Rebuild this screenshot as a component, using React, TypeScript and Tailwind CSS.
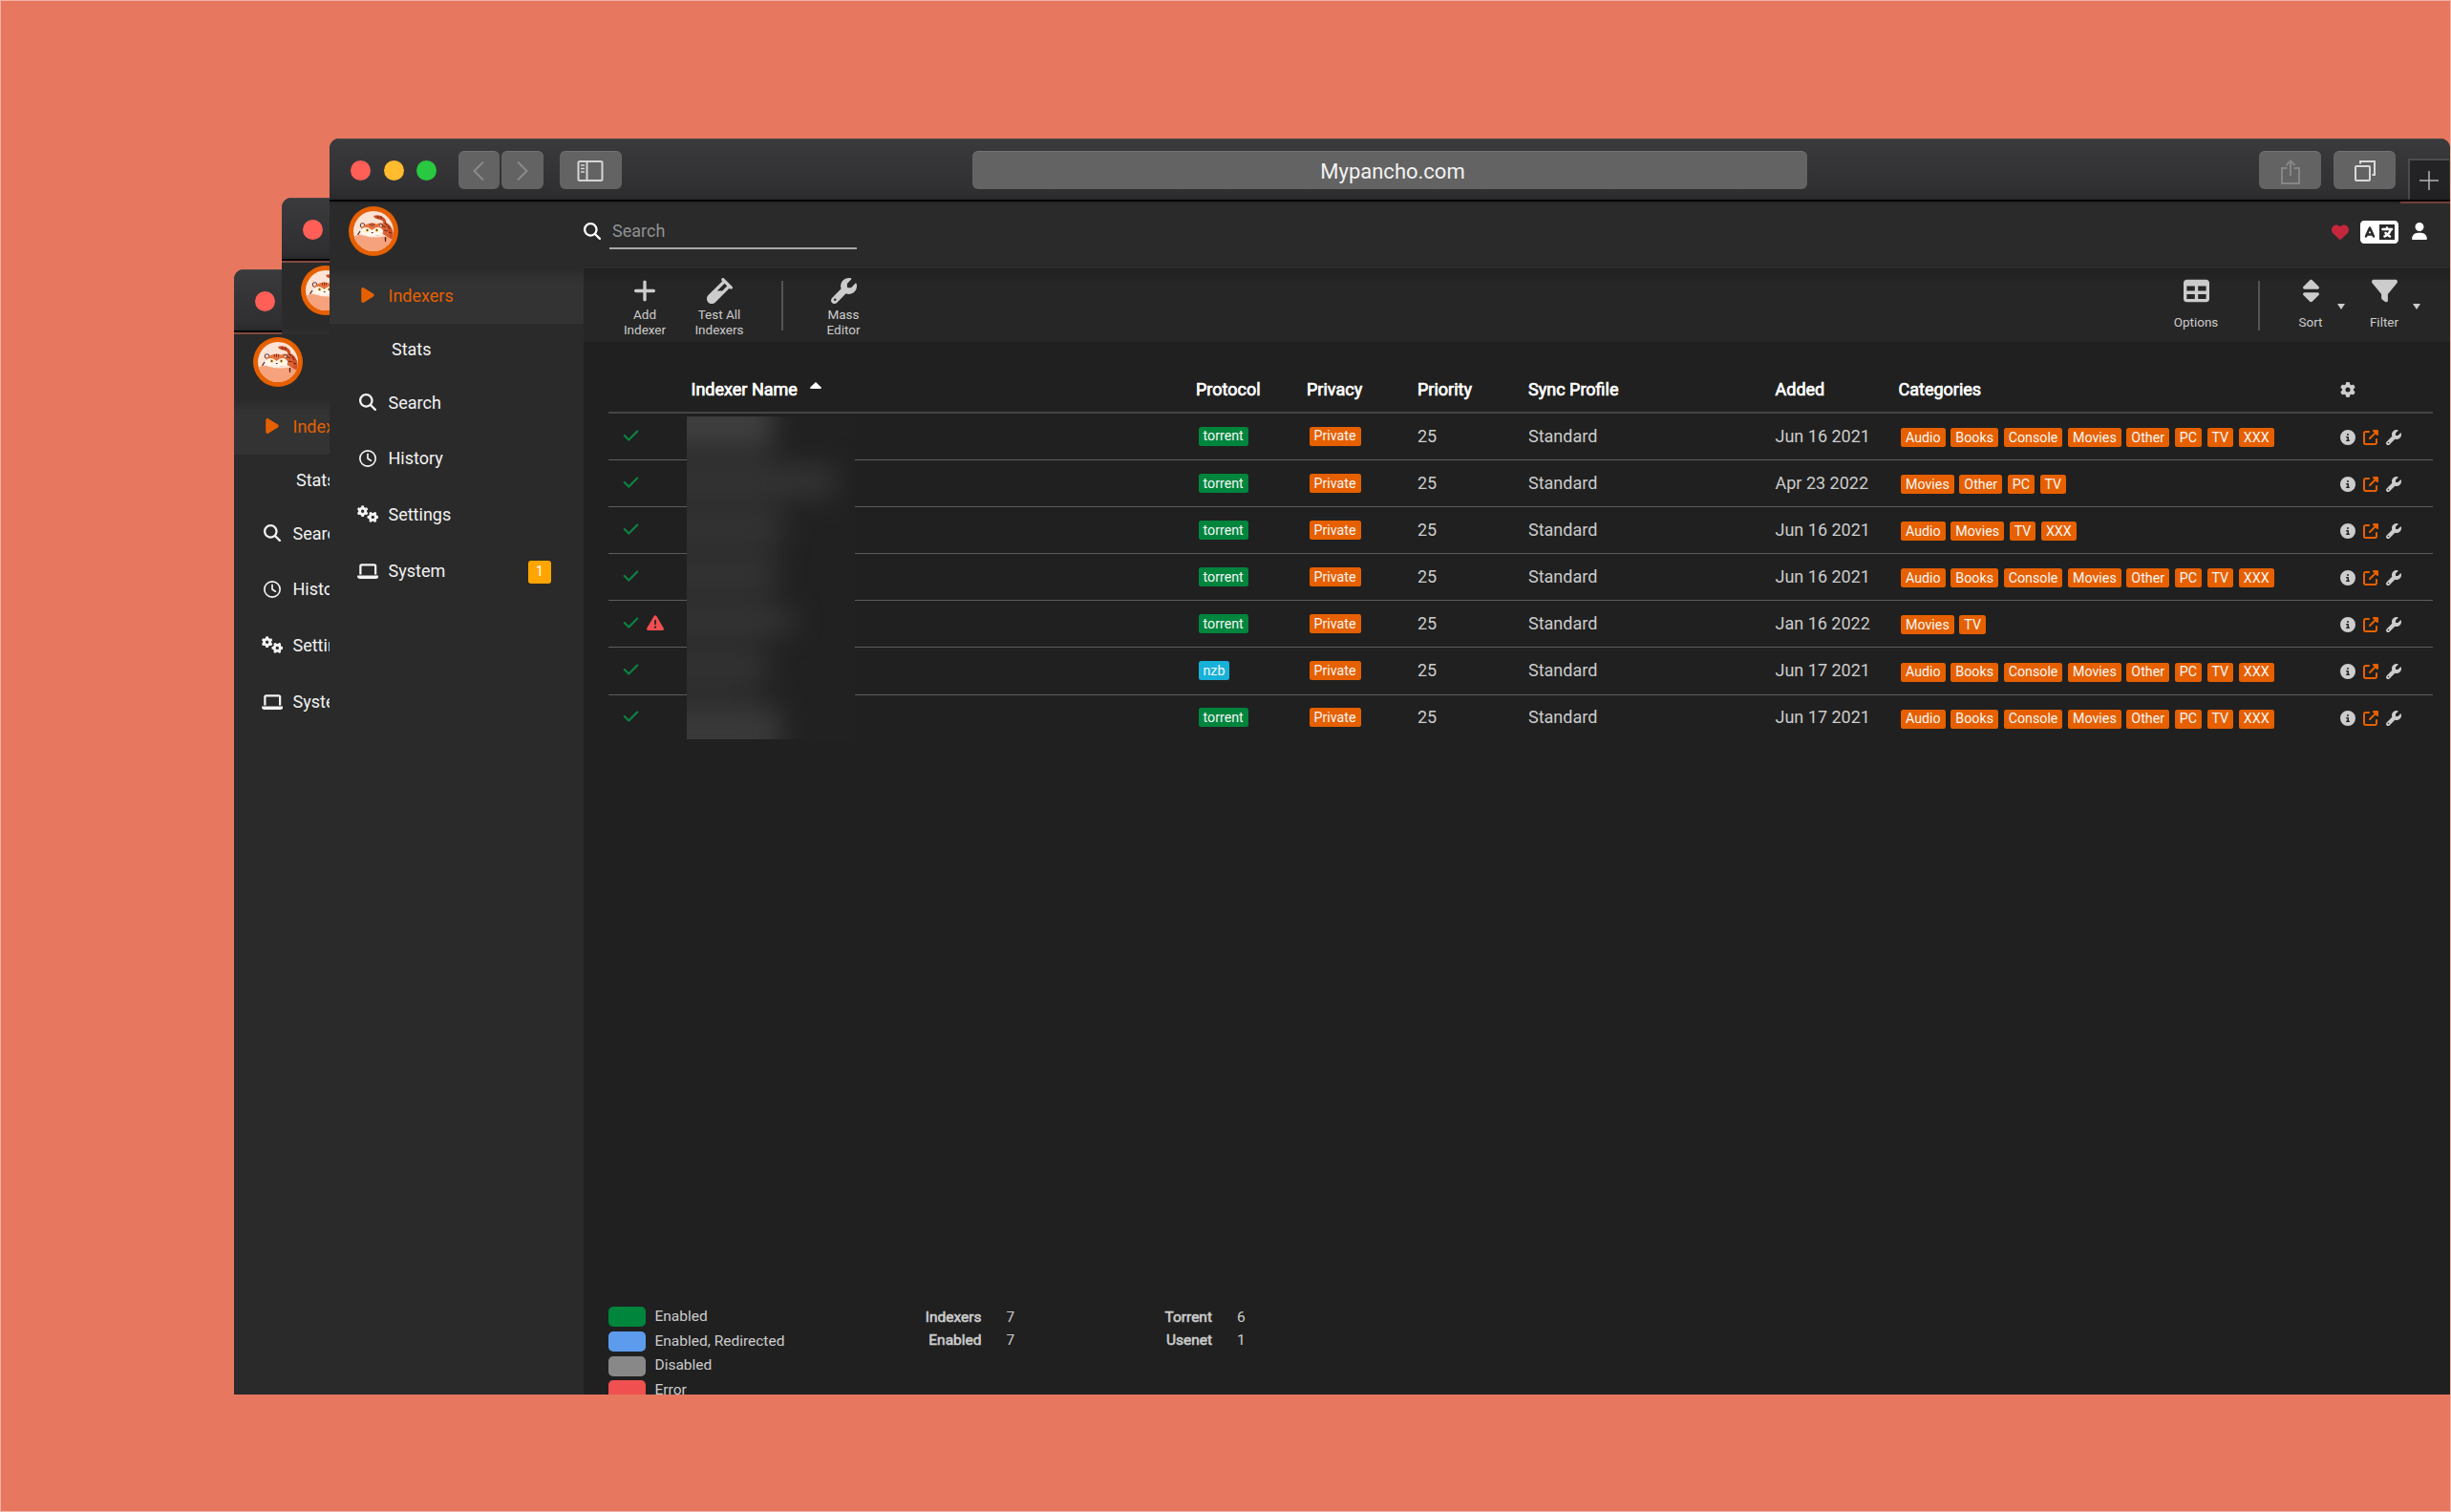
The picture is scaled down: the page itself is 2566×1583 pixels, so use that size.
import React from "react";
import {
  FaPlay, FaMagnifyingGlass, FaRegClock, FaGears, FaLaptop, FaPlus, FaVial, FaWrench, FaTable,
  FaSort, FaFilter, FaHeart, FaLanguage, FaUser, FaGear, FaCircleInfo, FaUpRightFromSquare,
  FaTriangleExclamation, FaCheck,
} from "react-icons/fa6";

const ALL = ["Audio", "Books", "Console", "Movies", "Other", "PC", "TV", "XXX"];

const ROWS = [
  { protocol: "torrent", added: "Jun 16 2021", cats: ALL },
  { protocol: "torrent", added: "Apr 23 2022", cats: ["Movies", "Other", "PC", "TV"] },
  { protocol: "torrent", added: "Jun 16 2021", cats: ["Audio", "Movies", "TV", "XXX"] },
  { protocol: "torrent", added: "Jun 16 2021", cats: ALL },
  { protocol: "torrent", added: "Jan 16 2022", cats: ["Movies", "TV"], error: true },
  { protocol: "nzb", added: "Jun 17 2021", cats: ALL },
  { protocol: "torrent", added: "Jun 17 2021", cats: ALL },
];

const COLS = "grid grid-cols-[87px_528.5px_116px_116px_116px_258.5px_129px_462px_1fr]";

function Logo() {
  return (
    <svg viewBox="0 0 52 52" className="h-[52px] w-[52px] shrink-0">
      <defs>
        <clipPath id="disc"><circle cx="26" cy="26" r="21" /></clipPath>
      </defs>
      <circle cx="26" cy="26" r="26" fill="#e66000" />
      <circle cx="26" cy="26" r="21" fill="#fde3d6" />
      <g clipPath="url(#disc)">
        <path d="M3 34 Q9 28 17 31 Q30 35 48 29 V50 H3Z" fill="#f6a27c" />
        <path d="M26 10 Q33 8 37 12 Q40 15 39 17 Q44 19 46 25 Q48 31 46 35 L41 32 L36 29 L33 20 Q35 18 36.500 17.500 Q36 14 31 13.500 Q27 13 26 10Z" fill="#cf4f24" />
        <path d="M30 18 Q38 16 41 23 L43 32 L36 29Z" fill="#dd6534" />
        <path d="M30 10 l1.500 3 M34 10.500 l0 3 M38 17 l2 3 M35 20 l4 2 M41 20 l2 4 M37 25 l4 1 M42 27 l3 1" stroke="#6b2417" strokeWidth="1" fill="none" />
        <circle cx="14.500" cy="20" r="2.300" fill="#fbeee4" stroke="#5a241a" strokeWidth="1" />
        <circle cx="33.500" cy="20.500" r="1.900" fill="#fbeee4" stroke="#5a241a" strokeWidth="1" />
        <path d="M14 22 Q17 18 24.500 17.500 Q32 18 34.500 22 L35.500 27 Q33 31 25 31 Q15 31 13 27Z" fill="#e4743f" />
        <path d="M12.500 25 Q16 20.500 21 22.500 L24.500 25 L28 22.500 Q33 20.500 36 25 Q37 30 31 30 Q25 32.500 18 30.500 Q12 30 12.500 25Z" fill="#fff6ec" />
        <path d="M22.500 18 v2.500 M24.500 17.500 v3.500 M26.500 18 v2.500" stroke="#7a2d1a" strokeWidth="0.900" />
        <circle cx="19.500" cy="25" r="1.800" fill="#e9bd55" />
        <circle cx="29.500" cy="25" r="1.800" fill="#e9bd55" />
        <circle cx="19.500" cy="25" r="0.800" fill="#2b120e" />
        <circle cx="29.500" cy="25" r="0.800" fill="#2b120e" />
        <path d="M23.500 27 h2.500 l-1.250 1.600z" fill="#5a2018" />
        <path d="M9.500 30 l2.500 -4 M38.500 32 v5 M37.500 34 h2" stroke="#5a241a" strokeWidth="1.200" />
      </g>
    </svg>
  );
}

function Dot({ className }: { className: string }) {
  return <span className={`h-[21px] w-[21px] rounded-full ${className}`} />;
}

function BarButton({ className, children }: { className: string; children: React.ReactNode }) {
  return (
    <span className={`flex h-10 items-center justify-center rounded-[6px] border-t border-[#727474] bg-[#636363] ${className}`}>
      {children}
    </span>
  );
}

function TitleBar() {
  return (
    <div className="flex h-[64px] shrink-0 border-t border-[#4a4a4b] bg-linear-to-b from-[#3a3a3c] to-[#2e2e30]">
      <div className="flex h-[64px] w-full items-center pl-[22px]">
        <div className="flex w-[112.500px] gap-[13.500px]">
          <Dot className="bg-[#ff5f57]" />
          <Dot className="bg-[#febc2e]" />
          <Dot className="bg-[#28c840]" />
        </div>
        <div className="flex gap-[2px]">
          <BarButton className="w-[43.500px]">
            <svg viewBox="0 0 12 20" className="h-5 w-3" fill="none" stroke="#8b8b8b" strokeWidth="2"><path d="M11 .5 L1.500 10 L11 19.500" /></svg>
          </BarButton>
          <BarButton className="w-[43.500px]">
            <svg viewBox="0 0 12 20" className="h-5 w-3" fill="none" stroke="#8b8b8b" strokeWidth="2"><path d="M1 .5 L10.500 10 L1 19.500" /></svg>
          </BarButton>
        </div>
        <BarButton className="ml-[17px] w-[65px]">
          <svg viewBox="0 0 28 22" className="h-[22px] w-7" fill="none" stroke="#d6d6d6" strokeWidth="2">
            <rect x="1.500" y="1" width="25" height="20" rx="1.500" />
            <path d="M10.500 1 V21" />
            <path d="M4 5 h4 M4 8.500 h4 M4 12 h4" strokeWidth="1.400" />
          </svg>
        </BarButton>
        <div className="ml-[367.500px] flex h-10 w-[874px] shrink-0 items-center justify-center rounded-[6px] border-t border-[#727474] bg-[#636363] pt-[2px] pl-[6px] text-[22px] leading-none text-[#f2f2f2]">
          Mypancho.com
        </div>
        <BarButton className="ml-[473px] w-[65px]">
          <svg viewBox="0 0 20 26" className="mt-[2px] h-[26px] w-5" fill="none" stroke="#868686" strokeWidth="2">
            <path d="M6.500 9 H1 V25 H19 V9 H13.500 M10 17 V1.500 M5.500 6 L10 1.500 L14.500 6" />
          </svg>
        </BarButton>
        <BarButton className="ml-[13px] w-[65px]">
          <svg viewBox="0 0 22 22" className="h-[22px] w-[22px]" fill="none" stroke="#d9d9d9" strokeWidth="2">
            <rect x="1" y="6" width="15" height="15" rx="1" />
            <path d="M6 3.500 V1 H21 V15 H18.500" />
          </svg>
        </BarButton>
        <div className="ml-[13px] flex h-[44px] w-[43px] shrink-0 items-center justify-center self-end border-t-2 border-l-2 border-[#4c4c4e] bg-[#232326] pr-[1px]">
          <svg viewBox="0 0 20 20" className="h-5 w-5" stroke="#b4b4b4" strokeWidth="1.500"><path d="M10 0 V20 M0 10 H20" /></svg>
        </div>
      </div>
    </div>
  );
}

function NavItem({ icon, label, className, badge }: { icon: React.ReactNode; label: string; className: string; badge?: string }) {
  return (
    <div className={`flex items-center ${className}`}>
      <span className="ml-[28px] flex w-[24px] justify-center">{icon}</span>
      <span className="ml-[9.500px] grow">{label}</span>
      {badge && (
        <span className="mt-[3px] mr-[34px] flex h-6 w-6 items-center justify-center rounded-[3px] bg-[#ffa500] pb-[2px] text-[14px] leading-none text-white">
          {badge}
        </span>
      )}
    </div>
  );
}

function Sidebar() {
  return (
    <div className="w-[266px] shrink-0 bg-[#2a2a2a] text-[18px] text-[#f3f3f3]">
      <NavItem className="h-[58px] bg-[#333333] pb-[2px] text-[#e66000]" icon={<FaPlay className="h-[18px] w-[16px]" />} label="Indexers" />
      <div className="flex h-[53px] items-center pl-[65px]">Stats</div>
      <NavItem className="h-[58.500px]" icon={<FaMagnifyingGlass className="h-[18px] w-[18px]" />} label="Search" />
      <NavItem className="h-[58.500px]" icon={<FaRegClock className="h-[18px] w-[18px]" />} label="History" />
      <NavItem className="h-[58.500px]" icon={<FaGears className="h-[18px] w-[22.500px]" />} label="Settings" />
      <NavItem className="h-[60px]" icon={<FaLaptop className="h-[18px] w-[22.500px]" />} label="System" badge="1" />
    </div>
  );
}

function PageHeader() {
  return (
    <div className="z-10 flex h-[68px] shrink-0 items-center bg-[#2a2a2a] shadow-[0_0_10px_4px_rgba(17,17,17,0.300)]">
      <div className="-mt-[10px] ml-[20px] shrink-0"><Logo /></div>
      <FaMagnifyingGlass className="-mt-[10px] ml-[194px] h-[18px] w-[18px] shrink-0 text-white" />
      <div className="-mt-[7px] ml-[9px] h-[34px] w-[259px] shrink-0 border-b-2 border-[#a9a9a9] pl-[3px] text-[18px] leading-[29px] text-[#8f9193]">
        Search
      </div>
      <div className="-mt-[9px] ml-[1543.500px] flex items-center text-white">
        <FaHeart className="h-[18px] w-[18px] text-[#c4273c]" />
        <FaLanguage className="ml-[12.500px] h-[32px] w-[40px]" />
        <FaUser className="-mt-[2px] ml-[14px] h-[18px] w-[16px]" />
      </div>
    </div>
  );
}

function ToolButton({ icon, lines, className }: { icon: React.ReactNode; lines: string[]; className: string }) {
  return (
    <div className={`flex shrink-0 flex-col items-center pt-[9px] ${className}`}>
      <span className="flex h-[28px] items-center">{icon}</span>
      <span className={lines.length === 1 ? "mt-[12px] text-[13.500px] leading-[15.500px]" : "mt-[4px] text-center text-[13.500px] leading-[15.500px]"}>
        {lines.map((l) => (
          <span key={l} className="block whitespace-nowrap">{l}</span>
        ))}
      </span>
    </div>
  );
}

function Caret({ up, className }: { up?: boolean; className: string }) {
  return (
    <svg viewBox="0 0 10 6" preserveAspectRatio="none" className={`shrink-0 ${className}`} fill="currentColor">
      {up ? <path d="M5 0 L10 5 Q10 6 9 6 H1 Q0 6 0 5Z" /> : <path d="M0 0 H10 L5 6Z" />}
    </svg>
  );
}

function Toolbar() {
  return (
    <div className="flex h-[77px] shrink-0 bg-[#262626] text-[#cccccc]">
      <ToolButton className="ml-[24px] w-[80px]" icon={<FaPlus className="h-[27px] w-[24px]" />} lines={["Add", "Indexer"]} />
      <ToolButton className="-ml-[2px] w-[80px]" icon={<FaVial className="h-[27px] w-[27px]" />} lines={["Test All", "Indexers"]} />
      <div className="mt-[13px] ml-[25px] h-[52px] w-[1.500px] bg-[#555555]" />
      <ToolButton className="ml-[23.500px] w-[80px]" icon={<FaWrench className="h-[27px] w-[27px]" />} lines={["Mass", "Editor"]} />
      <ToolButton className="ml-[1336px] w-[80px]" icon={<FaTable className="h-[27px] w-[27px]" />} lines={["Options"]} />
      <div className="mt-[13px] ml-[25px] h-[52px] w-[1.500px] bg-[#555555]" />
      <ToolButton className="ml-[13.500px] w-[80px]" icon={<FaSort className="h-[27px] w-[17px]" />} lines={["Sort"]} />
      <Caret className="mt-[37px] -ml-[12px] h-[6px] w-[8px]" />
      <ToolButton className="ml-[1px] w-[80px]" icon={<FaFilter className="h-[27px] w-[27px]" />} lines={["Filter"]} />
      <Caret className="mt-[37px] -ml-[10px] h-[6px] w-[8px]" />
    </div>
  );
}

function Tag({ className, children }: { className: string; children: React.ReactNode }) {
  return (
    <span className={`flex h-5 items-center rounded-[2.500px] px-[5px] text-[14.250px] leading-none text-[#f6f6f6] ${className}`}>{children}</span>
  );
}

function RedactedNames() {
  return (
    <div className="absolute top-[3px] left-[82px] h-[338px] w-[176px] overflow-hidden bg-[#212121]">
      <div className="flex flex-col items-start blur-[14px]">
        <div className="-mt-[20px] -ml-[30px] h-[50px] w-[120px] bg-[#3f3f3f]" />
        <div className="-ml-[30px] h-[20px] w-[120px] bg-[#2a2a2a]" />
        <div className="-ml-[30px] h-[36px] w-[185px] bg-[#333333]" />
        <div className="-ml-[30px] h-[20px] w-[125px] bg-[#2b2b2b]" />
        <div className="-ml-[30px] h-[25px] w-[132px] bg-[#353535]" />
        <div className="-ml-[30px] h-[22px] w-[120px] bg-[#2a2a2a]" />
        <div className="-ml-[30px] h-[25px] w-[125px] bg-[#353535]" />
        <div className="-ml-[30px] h-[24px] w-[120px] bg-[#2a2a2a]" />
        <div className="-ml-[30px] h-[25px] w-[142px] bg-[#363636]" />
        <div className="-ml-[30px] h-[24px] w-[110px] bg-[#292929]" />
        <div className="-ml-[30px] h-[25px] w-[115px] bg-[#353535]" />
        <div className="-ml-[30px] h-[27px] w-[105px] bg-[#292929]" />
        <div className="-ml-[30px] h-[60px] w-[128px] bg-[#393939]" />
      </div>
    </div>
  );
}

function IndexerTable() {
  return (
    <div className="mr-[18px] ml-[25.500px]">
      <div className={`${COLS} h-[75px] items-center border-b-2 border-[#454545] pt-[25px] text-[18px] text-white [-webkit-text-stroke:0.700px_white]`}>
        <span />
        <span className="flex">
          Indexer Name
          <Caret up className="mt-[6px] ml-[13px] h-[7px] w-[12px]" />
        </span>
        <span>Protocol</span>
        <span>Privacy</span>
        <span>Priority</span>
        <span>Sync Profile</span>
        <span>Added</span>
        <span>Categories</span>
        <FaGear className="mt-[1px] h-4 w-4 text-[#cccccc]" />
      </div>
      <div className="relative">
        {ROWS.map((r, i) => (
          <div key={i} className={`${COLS} h-[49.100px] items-center border-b text-[18px] text-[#cccccc] ${i === ROWS.length - 1 ? "border-transparent" : "border-[#5c5c5c]"}`}>
            <span className="-mt-[3px] flex items-center pl-[15px]">
              <FaCheck className="h-[18px] w-[17px] text-[#0c8243]" />
              {r.error && <FaTriangleExclamation className="ml-[8px] h-[18px] w-[18px] text-[#f05050]" />}
            </span>
            <span />
            <span className="-mt-[1px] flex pl-[2.500px]">
              <Tag className={r.protocol === "nzb" ? "bg-[#17b1d9]" : "bg-[#00853d]"}>{r.protocol}</Tag>
            </span>
            <span className="-mt-[1px] flex pl-[2.500px]"><Tag className="bg-[#e66000]">Private</Tag></span>
            <span className="-mt-[2px]">25</span>
            <span className="-mt-[2px]">Standard</span>
            <span className="-mt-[2px]">{r.added}</span>
            <span className="flex gap-[5.600px] pt-[2px] pl-[2.500px]">
              {r.cats.map((c) => <Tag key={c} className="bg-[#e66000]">{c}</Tag>)}
            </span>
            <span className="flex items-center gap-[8px] pt-[1px]">
              <FaCircleInfo className="h-[16px] w-[16px]" />
              <FaUpRightFromSquare className="h-[16px] w-[16px] text-[#e66000]" />
              <FaWrench className="h-[16px] w-[16px]" />
            </span>
          </div>
        ))}
        <RedactedNames />
      </div>
    </div>
  );
}

function Legend({ color, label }: { color: string; label: string }) {
  return (
    <div className="flex h-[21px] items-center">
      <span className={`h-[21px] w-[39px] rounded-[5px] ${color}`} />
      <span className="ml-[10px]">{label}</span>
    </div>
  );
}

function Stats({ className, items }: { className: string; items: [string, string][] }) {
  return (
    <div className={className}>
      {items.map(([k, v]) => (
        <div key={k} className="flex h-6 items-center">
          <span className="w-[80px] text-right [-webkit-text-stroke:0.600px_#cccccc]">{k}</span>
          <span className="ml-[26px]">{v}</span>
        </div>
      ))}
    </div>
  );
}

function Footer() {
  return (
    <div className="mt-auto flex h-[92px] shrink-0 overflow-hidden pl-[25.500px] text-[15.500px] leading-none text-[#cccccc]">
      <div className="flex w-[311px] flex-col gap-[4.800px]">
        <Legend color="bg-[#00853d]" label="Enabled" />
        <Legend color="bg-[#5d9cec]" label="Enabled, Redirected" />
        <Legend color="bg-[#888888]" label="Disabled" />
        <Legend color="bg-[#f05050]" label="Error" />
      </div>
      <Stats className="w-[241.500px]" items={[["Indexers", "7"], ["Enabled", "7"]]} />
      <Stats className="w-[240px]" items={[["Torrent", "6"], ["Usenet", "1"]]} />
    </div>
  );
}

function BackWindow({ className }: { className: string }) {
  return (
    <div className={`absolute isolate flex flex-col overflow-hidden rounded-tl-[10px] bg-[#2a2a2a] ${className}`}>
      <div className="flex w-[2220px] grow flex-col">
        <TitleBar />
        <div className="h-[2px] shrink-0 bg-black" />
        <div className="h-[2px] shrink-0 bg-[#a35c4d]" />
        <PageHeader />
        <Sidebar />
      </div>
    </div>
  );
}

export default function App() {
  return (
    <div className="relative h-[1583px] w-[2566px] overflow-hidden border border-[#f2b3a4] bg-[#e8775f] font-[Roboto,sans-serif]">
      <BackWindow className="top-[281px] left-[244px] h-[1178px] w-[101px]" />
      <BackWindow className="top-[206px] left-[294px] h-[143px] w-[51px]" />
      <div className="absolute top-[144px] left-[344px] isolate flex h-[1315px] w-[2220px] flex-col overflow-hidden rounded-t-[10px] bg-[#202020]">
        <TitleBar />
        <div className="h-[2px] shrink-0 bg-black" />
        <div className="flex h-[2px] shrink-0 justify-end bg-[#2a2a2a]"><div className="h-[2px] w-[52px] bg-[#8a5044]" /></div>
        <PageHeader />
        <div className="flex grow">
          <Sidebar />
          <div className="flex grow flex-col">
            <Toolbar />
            <IndexerTable />
            <Footer />
          </div>
        </div>
      </div>
    </div>
  );
}
